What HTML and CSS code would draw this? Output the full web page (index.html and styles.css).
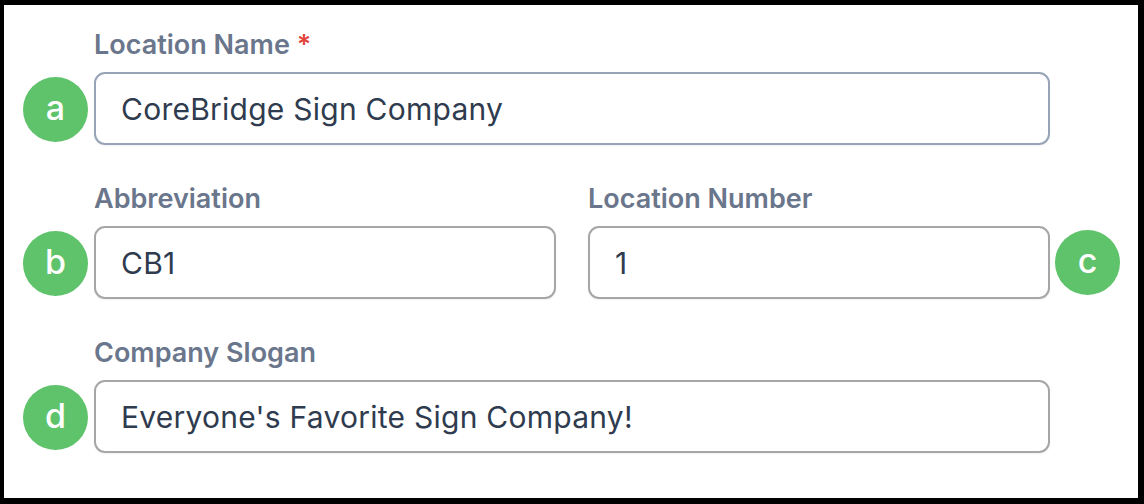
FILE: index.html
```html
<!DOCTYPE html>
<html lang="en">
<head>
<meta charset="utf-8">
<title>Location</title>
<link rel="stylesheet" href="styles.css">
</head>
<body>
<div class="frame">
  <div class="form">
    <div class="row">
      <div class="marker">a</div>
      <div class="fields">
        <div class="field full">
          <div class="label">Location Name <span class="req">*</span></div>
          <div class="input focus">CoreBridge Sign Company</div>
        </div>
      </div>
    </div>
    <div class="row">
      <div class="marker">b</div>
      <div class="fields">
        <div class="field">
          <div class="label">Abbreviation</div>
          <div class="input">CB1</div>
        </div>
        <div class="field">
          <div class="label">Location Number</div>
          <div class="input">1</div>
        </div>
      </div>
      <div class="marker right">c</div>
    </div>
    <div class="row">
      <div class="marker">d</div>
      <div class="fields">
        <div class="field full">
          <div class="label">Company Slogan</div>
          <div class="input">Everyone's Favorite Sign Company!</div>
        </div>
      </div>
    </div>
  </div>
</div>
</body>
</html>
```
FILE: styles.css
```css
html, body {
  margin: 0;
  padding: 0;
  background: #000;
}
.frame {
  box-sizing: border-box;
  width: 1144px;
  height: 504px;
  border-style: solid;
  border-color: #000;
  border-width: 5px 6px 6px 4px;
  background: #fff;
  font-family: Inter, "Noto Sans", sans-serif;
}
.form {
  padding: 24px 0 0 19px;
  display: flex;
  flex-direction: column;
  gap: 38px;
}
.row {
  display: flex;
  align-items: flex-end;
}
.marker {
  width: 65px;
  height: 65px;
  border-radius: 50%;
  background: #5fc36b;
  color: #fff;
  font-size: 34px;
  font-weight: 500;
  display: flex;
  align-items: center;
  justify-content: center;
  margin: 0 6px 3px 0;
  flex: none;
  line-height: 1;
  padding-bottom: 3px;
  box-sizing: border-box;
}
.marker.right {
  margin: 0 0 4px 5px;
}
.fields {
  width: 956px;
  display: grid;
  grid-template-columns: 462px 462px;
  column-gap: 32px;
}
.field.full {
  grid-column: span 2;
}
.label {
  font-size: 27px;
  line-height: 32px;
  font-weight: 600;
  color: #6a768b;
  margin-bottom: 11px;
  letter-spacing: 0;
}
.req {
  color: #e2453c;
}
.input {
  box-sizing: border-box;
  height: 73px;
  border: 2px solid #a6a6a6;
  border-radius: 11px;
  padding-left: 25px;
  display: flex;
  align-items: center;
  font-size: 30px;
  letter-spacing: 0.25px;
  color: #2f3b4e;
  box-shadow: 0 1px 2px rgba(0, 0, 0, 0.06);
}
.input.focus {
  border-color: #97a3b7;
}
```
